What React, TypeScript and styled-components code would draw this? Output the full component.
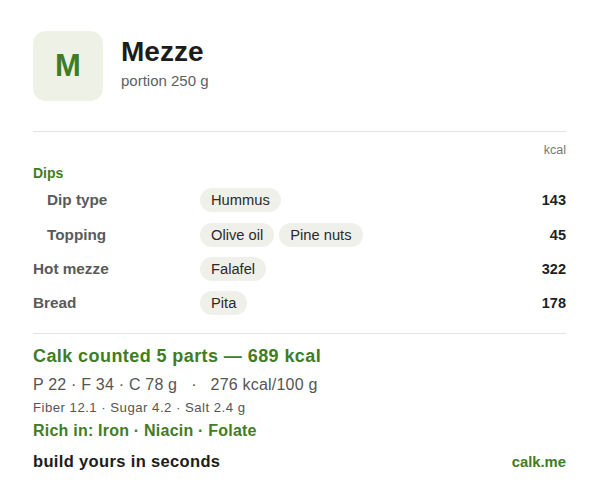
import React from 'react'
import styled, { createGlobalStyle } from 'styled-components'

const GlobalStyle = createGlobalStyle`
  html, body {
    margin: 0;
    padding: 0;
    background: #ffffff;
  }
  body {
    font-family: 'Liberation Sans', Arial, Helvetica, sans-serif;
    color: #222222;
  }
`

const green = '#3f7d23'

const Card = styled.div`
  width: 600px;
  box-sizing: border-box;
  padding: 31px 34px 0 33px;
`

const Header = styled.div`
  display: flex;
  align-items: center;
  gap: 18px;
  padding-bottom: 30px;
  border-bottom: 1px solid #e3e3e3;
`

const Badge = styled.div`
  width: 70px;
  height: 70px;
  flex-shrink: 0;
  border-radius: 13px;
  background: #eef2e6;
  display: flex;
  align-items: center;
  justify-content: center;
  color: ${green};
  font-weight: 700;
  font-size: 31px;
`

const TitleBlock = styled.div`
  display: flex;
  flex-direction: column;
  gap: 5px;
  margin-top: -6px;
`

const Title = styled.div`
  font-size: 28px;
  font-weight: 700;
  color: #1c1c1c;
  line-height: 30px;
`

const Subtitle = styled.div`
  font-size: 15px;
  color: #606060;
`

const Table = styled.div`
  padding: 10px 0 12px;
  border-bottom: 1px solid #e3e3e3;
`

const UnitRow = styled.div`
  text-align: right;
  font-size: 12.5px;
  color: #777777;
  line-height: 16px;
`

const Section = styled.div`
  color: ${green};
  font-size: 14px;
  font-weight: 700;
  margin: 7px 0 2px;
  line-height: 16px;
`

const Row = styled.div<{ $indent?: boolean }>`
  display: grid;
  grid-template-columns: ${p => (p.$indent ? '153px' : '167px')} 1fr auto;
  align-items: center;
  height: 34.4px;
  padding-left: ${p => (p.$indent ? '14px' : '0')};
`

const Label = styled.div`
  font-size: 15.3px;
  font-weight: 700;
  color: #5a5a5a;
`

const Chips = styled.div`
  display: flex;
  gap: 5px;
`

const Chip = styled.span`
  display: inline-flex;
  align-items: center;
  height: 24px;
  padding: 0 11px;
  border-radius: 12px;
  background: #f0f0ea;
  font-size: 14.7px;
  color: #2a2a2a;
`

const Kcal = styled.div`
  font-size: 14.5px;
  font-weight: 700;
  color: #1f1f1f;
  text-align: right;
`

const Summary = styled.div`
  padding-top: 11px;
  display: flex;
  flex-direction: column;
`

const Total = styled.div`
  color: ${green};
  font-size: 18px;
  letter-spacing: 0.42px;
  font-weight: 700;
  line-height: 22px;
`

const Macros = styled.div`
  color: #555555;
  font-size: 16px;
  letter-spacing: 0.2px;
  line-height: 20px;
  margin-top: 8px;
  white-space: pre;
`

const Minor = styled.div`
  color: #555555;
  font-size: 13.2px;
  letter-spacing: 0.48px;
  line-height: 16px;
  margin-top: 5px;
`

const Rich = styled.div`
  color: ${green};
  font-size: 16px;
  letter-spacing: 0.22px;
  font-weight: 700;
  line-height: 20px;
  margin-top: 5px;
`

const Footer = styled.div`
  display: flex;
  justify-content: space-between;
  align-items: baseline;
  margin-top: 11px;
`

const Tagline = styled.div`
  font-size: 16.5px;
  letter-spacing: 0.35px;
  font-weight: 700;
  color: #1c1c1c;
`

const Brand = styled.div`
  font-size: 14.8px;
  font-weight: 700;
  color: ${green};
`

const rows: { label: string; chips: string[]; kcal: number; indent?: boolean }[] = [
  { label: 'Dip type', chips: ['Hummus'], kcal: 143, indent: true },
  { label: 'Topping', chips: ['Olive oil', 'Pine nuts'], kcal: 45, indent: true },
  { label: 'Hot mezze', chips: ['Falafel'], kcal: 322 },
  { label: 'Bread', chips: ['Pita'], kcal: 178 },
]

export default function App() {
  return (
    <>
      <GlobalStyle />
      <Card>
        <Header>
          <Badge>M</Badge>
          <TitleBlock>
            <Title>Mezze</Title>
            <Subtitle>portion 250 g</Subtitle>
          </TitleBlock>
        </Header>
        <Table>
          <UnitRow>kcal</UnitRow>
          <Section>Dips</Section>
          {rows.map(r => (
            <Row key={r.label} $indent={r.indent}>
              <Label>{r.label}</Label>
              <Chips>
                {r.chips.map(c => (
                  <Chip key={c}>{c}</Chip>
                ))}
              </Chips>
              <Kcal>{r.kcal}</Kcal>
            </Row>
          ))}
        </Table>
        <Summary>
          <Total>Calk counted 5 parts — 689 kcal</Total>
          <Macros>P 22 · F 34 · C 78 g   ·   276 kcal/100 g</Macros>
          <Minor>Fiber 12.1 · Sugar 4.2 · Salt 2.4 g</Minor>
          <Rich>Rich in: Iron · Niacin · Folate</Rich>
          <Footer>
            <Tagline>build yours in seconds</Tagline>
            <Brand>calk.me</Brand>
          </Footer>
        </Summary>
      </Card>
    </>
  )
}
